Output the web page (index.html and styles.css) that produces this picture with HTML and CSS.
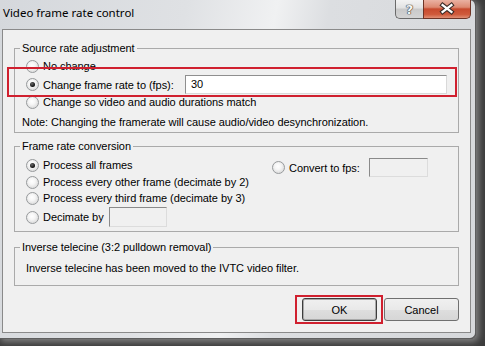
FILE: index.html
```html
<!DOCTYPE html>
<html lang="en">
<head>
    <meta charset="UTF-8">
    <meta name="viewport" content="width=device-width, initial-scale=1.0">
    <title>Video frame rate control</title>
    <link rel="stylesheet" href="styles.css">
</head>
<body>
    <div class="window">
        <div class="titlebar">
            <span class="title">Video frame rate control</span>
            <div class="caption-buttons">
                <span class="cap-btn help">?</span>
                <span class="cap-btn close">
                    <svg width="47" height="18" viewBox="0 0 47 18">
                        <path d="M19 5 L28 12 M28 5 L19 12" stroke="#3b2a26" stroke-width="4.6" stroke-linecap="square" fill="none"/>
                        <path d="M19 5 L28 12 M28 5 L19 12" stroke="#ffffff" stroke-width="2.4" stroke-linecap="square" fill="none"/>
                    </svg>
                </span>
            </div>
        </div>

        <div class="client">
            <fieldset class="group group-source">
                <legend>Source rate adjustment</legend>
                <div class="option row-first"><span class="radio"></span>No change</div>
                <div class="option row-fps">
                    <span class="radio checked"></span>
                    <span class="label fps-label">Change frame rate to (fps):</span>
                    <span class="textbox fps-box">30</span>
                </div>
                <div class="option row-short"><span class="radio"></span>Change so video and audio durations match</div>
                <div class="note">Note: Changing the framerate will cause audio/video desynchronization.</div>
            </fieldset>

            <fieldset class="group group-conversion">
                <legend>Frame rate conversion</legend>
                <div class="conversion-body">
                    <div class="conversion-left">
                        <div class="option row-first"><span class="radio checked"></span>Process all frames</div>
                        <div class="option row-short"><span class="radio"></span>Process every other frame (decimate by 2)</div>
                        <div class="option row-short"><span class="radio"></span>Process every third frame (decimate by 3)</div>
                        <div class="option row-decimate">
                            <span class="radio"></span>
                            <span class="label decimate-label">Decimate by</span>
                            <span class="textbox disabled decimate-box"></span>
                        </div>
                    </div>
                    <div class="conversion-right">
                        <div class="option row-convert">
                            <span class="radio"></span>
                            <span class="label convert-label">Convert to fps:</span>
                            <span class="textbox disabled convert-box"></span>
                        </div>
                    </div>
                </div>
            </fieldset>

            <fieldset class="group group-telecine">
                <legend>Inverse telecine (3:2 pulldown removal)</legend>
                <div class="telecine-text">Inverse telecine has been moved to the IVTC video filter.</div>
            </fieldset>

            <div class="buttons">
                <span class="highlight"><button class="btn default">OK</button></span>
                <button class="btn cancel">Cancel</button>
            </div>
        </div>

        <!-- red annotation round the fps row -->
        <div class="mark fps-mark"></div>
    </div>
</body>
</html>
```

FILE: styles.css
```css
/* General Styles */
body {
    margin: 0;
    width: 485px;
    height: 346px;
    overflow: hidden;
    background-color: #3c3c3c; /* dark desktop behind the dialog */
    font-family: "Liberation Sans", Arial, sans-serif;
    font-size: 11px;
    letter-spacing: -0.05px;
    color: #000000;
}

.window {
    position: relative;
    width: 476px;
    height: 339px;
    box-sizing: border-box;
    border-right: 1px solid #5e5e5e;
    border-bottom: 1px solid #5e5e5e;
    border-radius: 0 6px 6px 0;
    background: linear-gradient(100deg, #d5d8dc 0%, #dfe1e4 35%, #f0f1f2 52%, #dcdee1 62%, #d6d8db 100%);
    box-shadow: 2px 2px 6px 1px rgba(175, 175, 175, 0.6);
    display: flex;
    flex-direction: column;
}

/* Title bar */
.titlebar {
    height: 29px;
    display: flex;
    justify-content: space-between;
    align-items: flex-start;
}

.title {
    font-family: "Noto Sans", "Open Sans", sans-serif;
    font-size: 11.5px;
    letter-spacing: 0;
    line-height: 16px;
    padding: 5px 0 0 3px;
}

.caption-buttons {
    display: flex;
    margin-right: 4px;
}

.cap-btn {
    height: 18px;
    border: 1px solid #6a6a6a;
    border-top: none;
    display: flex;
    align-items: center;
    justify-content: center;
}

.help {
    width: 27px;
    border-right: none;
    border-radius: 0 0 0 5px;
    background: linear-gradient(#f3f3f3, #e2e2e2 45%, #c9c9c9 50%, #d4d4d4 100%);
    font-family: "DejaVu Sans", sans-serif;
    font-size: 13px;
    font-weight: bold;
    color: #f6f6f6;
    text-shadow: 0 0 1px #333, 0 0 1px #333, 0 0 1px #333;
}

.close {
    width: 46px;
    border-color: #6e3426;
    border-radius: 0 0 5px 0;
    background: linear-gradient(#eab1a2, #dd8a72 40%, #c74a2e 50%, #cf5a3b 80%, #e08e74 100%);
}

/* Client area */
.client {
    margin-left: 2px;
    width: 469px;
    height: 304px;
    box-sizing: border-box;
    border: 1px solid #8a8a8a;
    background-color: #f0f0f0;
}

.group {
    margin: 0 11px;
    padding: 0;
    min-width: 0;
    border: 1px solid #aaaaaa;
}

.group legend {
    margin-left: 5px;
    padding: 0 2px;
    line-height: 13px;
}

.group-source {
    margin-top: 12px;
    padding-bottom: 2px;
}

.group-conversion {
    margin-top: 7px;
    padding-bottom: 4px;
}

.group-telecine {
    margin-top: 9px;
    padding-bottom: 9px;
}

.option {
    display: flex;
    align-items: center;
    padding-left: 11px;
    white-space: nowrap;
}

.row-first {
    margin-top: 2px;
    height: 18px;
}

.row-fps {
    height: 19px;
}

.row-short {
    height: 16px;
}

.note {
    margin-top: 4px;
    line-height: 16px;
    padding-left: 7px;
}

/* Radio buttons */
.radio {
    width: 13px;
    height: 13px;
    box-sizing: border-box;
    margin-right: 4px;
    border: 1px solid #979a9c;
    border-radius: 50%;
    background: radial-gradient(circle at 45% 40%, #ffffff 0, #f6f6f6 35%, #e0e0e0 70%, #f4f4f4 100%);
    display: flex;
    align-items: center;
    justify-content: center;
    flex-shrink: 0;
}

.radio.checked::after {
    content: "";
    width: 5px;
    height: 5px;
    border-radius: 50%;
    background: radial-gradient(circle at 40% 35%, #6a6a6a, #0c0c0c 70%);
}

/* Text boxes */
.label {
    flex-shrink: 0;
}

.textbox {
    box-sizing: border-box;
    border: 1px solid;
    border-color: #8f8f8f #d9d9d9 #d9d9d9 #8f8f8f;
    background-color: #ffffff;
    padding-left: 5px;
    line-height: 17px;
}

.textbox.disabled {
    background-color: #f0f0f0;
    border-color: #8a8a8a #dcdcdc #dcdcdc #8a8a8a;
}

.fps-label {
    width: 142px;
}

.fps-box {
    width: 262px;
    height: 19px;
}

/* Frame rate conversion */
.conversion-body {
    display: flex;
}

.conversion-left {
    width: 257px;
}

.conversion-left .row-first {
    margin-top: 3px;
}

.row-decimate {
    margin-top: 1px;
    height: 20px;
}

.decimate-label {
    width: 66px;
}

.decimate-box {
    width: 58px;
    height: 20px;
}

.conversion-right {
    margin-top: 5px;
}

.row-convert {
    padding-left: 0;
    height: 19px;
}

.convert-label {
    width: 80px;
}

.convert-box {
    width: 59px;
    height: 19px;
}

/* Inverse telecine */
.telecine-text {
    padding: 6px 0 0 11px;
    line-height: 16px;
}

/* Buttons */
.buttons {
    margin-top: 9px;
    padding-right: 11px;
    display: flex;
    justify-content: flex-end;
    align-items: center;
}

.highlight {
    border: 2px solid #d0202f; /* red annotation */
    padding: 1px 4px 1px 5px;
    display: flex;
}

.btn {
    width: 75px;
    height: 23px;
    margin: 0;
    padding: 0;
    border: 1px solid #707070;
    border-radius: 3px;
    background: linear-gradient(#f0f0f0, #e9e9e9 50%, #dedede 51%, #d6d6d6 100%);
    font-family: "Liberation Sans", Arial, sans-serif;
    font-size: 11px;
    color: #000000;
}

.btn.default {
    border-color: #3d3d3d;
    box-shadow: inset 0 0 0 1px #a9a9a9;
}

.cancel {
    margin-left: 1px;
}

/* Red annotation round the fps row */
.mark {
    position: absolute;
    box-sizing: border-box;
    border: 2px solid #d0202f;
}

.fps-mark {
    left: 7px;
    top: 67px;
    width: 450px;
    height: 30px;
}
```
